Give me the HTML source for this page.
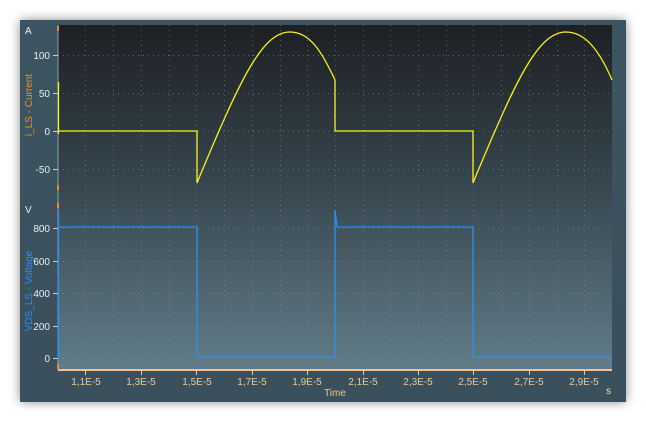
<!DOCTYPE html>
<html><head><style>
html,body{margin:0;padding:0;background:#fff;width:646px;height:422px;overflow:hidden}
.f{position:absolute;left:20px;top:20px;width:606px;height:382px;background:linear-gradient(#3c5461,#3a505c);box-shadow:0 0 10px rgba(0,0,0,.45)}
svg{position:absolute;left:0;top:0}
text{font-family:"Liberation Sans",sans-serif;font-size:10px}
</style></head><body>
<div class="f"></div>
<svg width="646" height="422">
<defs><linearGradient id="g" x1="0" y1="0" x2="0" y2="1"><stop offset="0" stop-color="#1d2023"/><stop offset="0.45" stop-color="#36454d"/><stop offset="1" stop-color="#617d89"/></linearGradient></defs>
<rect x="58" y="25" width="554" height="345" fill="url(#g)"/>
<g stroke="#8a8a80" stroke-width="1" stroke-dasharray="1,4" opacity="0.6">
<path d="M85.5 25V370M113.5 25V370M141.5 25V370M169.5 25V370M196.5 25V370M224.5 25V370M252.5 25V370M280.5 25V370M307.5 25V370M335.5 25V370M363.5 25V370M390.5 25V370M418.5 25V370M446.5 25V370M473.5 25V370M501.5 25V370M529.5 25V370M557.5 25V370M584.5 25V370"/>
<path d="M58 55.5H612M58 93.5H612M58 131.5H612M58 169.5H612M58 228.5H612M58 261.5H612M58 293.5H612M58 326.5H612M58 358.5H612"/>
</g>
<line x1="58" y1="370" x2="612" y2="370" stroke="#f3c28e" stroke-width="2"/>
<line x1="58" y1="25" x2="58" y2="370" stroke="#8aa0aa" stroke-width="1"/>
<g stroke="#f08a20" stroke-width="2"><path d="M58 26v5M58 185v5M58 203v5M58 364v5"/></g>
<g stroke="#c8d0d4" stroke-width="1"><path d="M53 55.5h5M53 93.5h5M53 131.5h5M53 169.5h5M53 228.5h5M53 261.5h5M53 293.5h5M53 326.5h5M53 358.5h5"/>
<path d="M85.5 370v5M141.5 370v5M196.5 370v5M252.5 370v5M307.5 370v5M363.5 370v5M418.5 370v5M473.5 370v5M529.5 370v5M584.5 370v5"/></g>
<path d="M58.5 82V134M58 131H197V183L199 178C240 80 262 32 290 32C310 32 322 52 335 80V131H473V183L475 178C516 80 538 32 566 32C586 32 600 52 612 80" fill="none" stroke="#f7f21a" stroke-width="1.3"/>
<path d="M58.5 211V360M58 227H197V357H335V210L337 227H473V357H612" fill="none" stroke="#2a8ff0" stroke-width="1.3"/>
<g fill="#e8eef0" text-anchor="end">
<text x="50" y="59">100</text><text x="50" y="97">50</text><text x="50" y="135">0</text><text x="50" y="173">-50</text>
<text x="50" y="232">800</text><text x="50" y="265">600</text><text x="50" y="297">400</text><text x="50" y="330">200</text><text x="50" y="362">0</text>
</g>
<text x="25" y="34" fill="#e8eef0" font-size="11">A</text>
<text x="25" y="213" fill="#e8eef0" font-size="11">V</text>
<text transform="translate(32,105) rotate(-90)" text-anchor="middle" fill="#e8961e" font-size="12">i_LS - Current</text>
<text transform="translate(32,291) rotate(-90)" text-anchor="middle" fill="#2a8ff0" font-size="12">VDS_LS - Voltage</text>
<g fill="#f0c890" text-anchor="middle">
<text x="86" y="385">1,1E-5</text><text x="141" y="385">1,3E-5</text><text x="197" y="385">1,5E-5</text><text x="252" y="385">1,7E-5</text><text x="307" y="385">1,9E-5</text><text x="363" y="385">2,1E-5</text><text x="418" y="385">2,3E-5</text><text x="473" y="385">2,5E-5</text><text x="529" y="385">2,7E-5</text><text x="584" y="385">2,9E-5</text>
<text x="335" y="396" font-size="11">Time</text>
</g>
<text x="606" y="394" fill="#f0e0c8" font-size="11">s</text>
</svg>
</body></html>
